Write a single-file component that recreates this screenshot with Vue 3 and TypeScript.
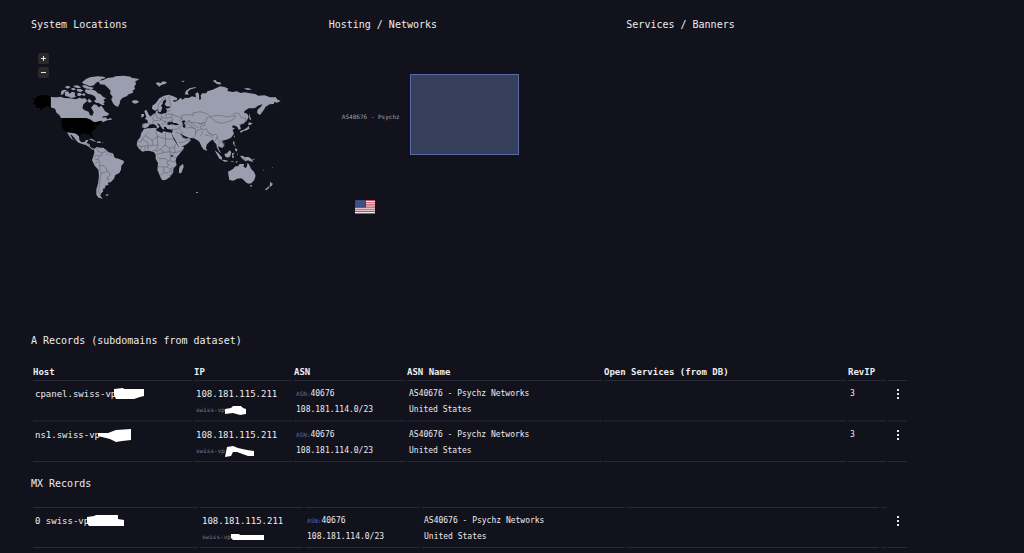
<script setup lang="ts">
interface Mask {
  w: number
  h: number
  points: string
}

interface RecordRow {
  host: string
  hostMask: Mask
  ip: string
  ptr: string
  ptrMask: Mask
  asn: string
  range: string
  asnName: string
  country: string
  revIp: string
}

interface RecordGroup {
  id: string
  title: string
  headers: string[]
  rows: RecordRow[]
}

const shared = {
  ip: '108.181.115.211',
  ptr: 'swiss-vp',
  asn: '40676',
  range: '108.181.114.0/23',
  asnName: 'AS40676 - Psychz Networks',
  country: 'United States',
}

const groups: RecordGroup[] = [
  {
    id: 'a',
    title: 'A Records (subdomains from dataset)',
    headers: ['Host', 'IP', 'ASN', 'ASN Name', 'Open Services (from DB)', 'RevIP', ''],
    rows: [
      {
        ...shared,
        host: 'cpanel.swiss-vp',
        hostMask: { w: 30, h: 12, points: '0,1 9,0 10,1 30,1 30,8 26,9 20,11 2,11 0,7' },
        ptrMask: { w: 21, h: 9, points: '0,3 6,2 8,0 16,0 18,2 21,3 21,8 15,9 8,7 0,8' },
        revIp: '3',
      },
      {
        ...shared,
        host: 'ns1.swiss-vp',
        hostMask: { w: 33, h: 13, points: '0,4 10,4 18,1 33,0 33,11 24,12 18,13 12,10 0,7' },
        ptrMask: { w: 29, h: 11, points: '2,1 8,0 13,2 22,4 29,5 29,10 23,10 12,6 8,6 6,10 0,11' },
        revIp: '3',
      },
    ],
  },
  {
    id: 'mx',
    title: 'MX Records',
    headers: ['', '', '', '', '', '', ''],
    rows: [
      {
        ...shared,
        host: '0 swiss-vp',
        hostMask: { w: 37, h: 12, points: '0,2 7,1 9,0 31,0 31,4 37,5 37,11 2,11 0,8' },
        ptrMask: { w: 33, h: 6, points: '0,0 8,0 9,1 33,1 33,6 2,6 0,4' },
        revIp: '',
      },
    ],
  },
]
</script>

<template>
  <main class="page">
    <section class="overview">
      <article class="panel">
        <h2>System Locations</h2>
        <div class="map">
          <div class="zoom">
            <button type="button" aria-label="Zoom in">
              <svg viewBox="0 0 11 11"><path d="M5.5 3v5M3 5.5h5" /></svg>
            </button>
            <button type="button" aria-label="Zoom out">
              <svg viewBox="0 0 11 11"><path d="M3 5.5h5" /></svg>
            </button>
          </div>
          <svg class="world" viewBox="33 75 768 399" role="img" aria-label="World map">
            <g class="land">
              <path d="M92 155L100 157 112 157 122 155 132 159 150 160 168 163 178 158 188 161 195 159 202 168 190 178 187 190 194 196 206 200 210 211 217 212 221 202 217 194 213 188 222 178 230 180 236 187 244 182 250 190 255 199 268 206 262 212 250 214 246 218 258 217 262 223 274 219 275 224 262 226 248 232 246 227 238 228 228 231 220 230 210 223 198 219 123 219 118 210 110 204 105 191 92 187Z" />
              <path d="M134 141L144 139 149 146 156 140 166 143 164 149 168 156 154 159 146 155 136 153ZM124 138L132 134 142 136 132 142 130 148 122 150ZM134 126L144 122 152 127 143 131ZM152 131L161 128 168 134 158 136ZM160 122L172 121 184 127 175 130 164 127ZM170 133L182 132 190 137 181 141 172 139ZM172 145L181 143 187 149 179 153 172 152ZM186 112L198 102 210 97 232 94 252 95 257 99 244 103 238 109 228 113 222 121 210 124 200 119 190 116ZM186 121L198 121 207 125 221 128 218 132 200 131 190 127ZM196 133L206 134 212 132 228 138 232 144 242 148 249 155 258 160 250 165 255 171 250 175 254 180 246 180 236 174 228 173 222 168 229 163 224 154 216 149 204 147 195 141ZM202 166L208 161 216 170 207 173ZM189 145L197 147 193 153 186 150Z" />
              <path d="M235 107L250 105 262 99 281 97 286 94 312 92 332 95 334 98 358 102 350 107 346 109 348 118 343 124 345 132 338 137 339 143 326 148 320 154 308 158 301 166 299 176 294 185 288 184 281 178 276 169 274 162 278 156 270 145 272 137 262 127 254 119 240 118Z" />
              <path d="M335 169L341 166 350 166 357 170 353 174 345 176 339 174Z" />
              <path d="M141 261L158 264 168 266 177 274 178 284 184 292 194 291 198 285 205 285 200 294 209 298 210 305 217 310 224 311 218 315 208 307 198 300 186 297 173 292 166 282 156 271 150 268 159 284 154 281 147 272Z" />
              <path d="M205 283L215 281 229 290 220 289 212 284ZM230 290L240 289 244 293 232 294ZM247 292L251 293 248 295Z" />
              <path d="M222 312L230 306 240 308 250 308 258 314 266 322 279 325 284 338 296 341 312 348 311 354 304 362 303 374 298 384 286 390 282 401 272 412 263 413 266 419 256 422 255 430 248 432 250 438 243 446 241 452 248 461 236 458 229 449 229 433 234 416 237 392 235 374 224 362 216 346 219 335 223 325Z" />
              <path d="M256 450L262 448 267 449 260 453Z" />
            </g>
            <g class="home">
              <path d="M92 153L76 151 60 151 48 155 50 160 37 162 46 168 39 175 48 180 45 187 56 189 63 187 58 195 47 202 65 193 75 185 84 184 92 190Z" />
              <path d="M125 220L192 219 206 222 213 226 223 233 233 232 240 228 244 229 239 238 230 243 226 251 215 260 214 266 219 275 218 280 212 275 209 268 199 268 194 265 184 268 178 274 168 265 158 263 143 262 132 256 126 246 124 232Z" />
            </g>
            <g transform="translate(390 0)">
              <g class="land">
                <path d="M-18 252L-8 250 0 250 14 248 20 250 19 257 28 260 35 264 41 259 54 262 65 263 66 269 72 284 79 295 86 306 102 305 101 312 90 325 79 338 77 347 80 360 70 371 70 382 60 396 48 404 38 406 34 402 27 386 22 374 24 354 17 341 17 329 12 322 0 318 -14 318 -23 320 -33 311 -40 301 -38 288 -29 276 -26 264Z" />
                <path d="M99 356L101 365 94 384 87 385 87 372 90 364Z" />
                <path d="M-22 236L-6 234 -8 225 -13 222 -4 219 3 213 11 206 17 205 18 198 23 196 24 205 34 207 49 203 51 195 46 191 59 189 62 185 49 184 44 178 49 169 46 163 39 169 38 176 33 182 37 188 32 201 27 202 23 193 15 197 6 191 7 182 18 174 28 160 42 152 56 149 70 154 82 160 80 166 68 166 74 171 85 165 92 158 97 164 106 158 116 159 126 154 138 157 136 146 143 141 147 148 148 165 153 162 152 151 157 145 169 145 172 139 188 134 210 124 224 126 235 131 232 138 248 141 260 139 272 144 284 142 300 145 316 147 325 152 344 151 360 157 378 157 381 163 392 168 381 173 372 171 372 177 359 178 346 186 343 193 330 210 322 205 322 195 334 184 337 178 324 182 314 190 296 190 283 199 283 204 292 206 296 215 290 228 280 237 274 237 270 242 273 252 266 254 262 246 257 243 249 241 246 247 255 250 248 255 252 266 243 278 230 284 222 286 216 288 223 300 218 309 211 307 204 303 207 314 214 324 208 321 201 308 199 297 193 292 189 284 182 287 171 298 167 312 162 315 155 305 148 290 141 285 132 280 118 279 102 272 91 264 99 278 110 281 117 278 123 286 111 297 90 308 84 302 78 289 71 277 66 267 68 254 52 252 47 245 41 246 43 254 37 251 28 238 20 234 29 245 22 251 19 242 11 237 4 238 -2 240 -6 246 -16 250 -24 247Z" />
                <path d="M-17 198L-11 194 -8 200 -4 208 2 217 -3 222 -16 223 -11 216ZM-26 207L-18 207 -18 214 -26 218Z" />
                <path d="M17 114L25 112 32 115 38 109 51 111 47 116 34 120 28 125 21 119ZM93 108L104 107 100 111ZM104 148L108 137 119 130 137 126 137 129 122 133 113 140 116 149ZM188 107L197 105 201 111 211 112 214 118 202 118 196 113ZM281 131L293 129 306 133 294 135ZM298 204L300 215 304 222 300 226 297 216Z" />
                <path d="M296 232L308 235 300 241 295 240ZM297 242L298 251 290 256 280 258 273 264 270 258 281 254 290 249ZM252 271L255 274 252 279ZM250 288L254 292 253 298 258 305 252 301 249 295ZM256 309L262 313 261 320 255 316ZM166 309L171 313 169 318 165 315ZM194 316L204 323 216 337 216 344 208 341 200 327ZM214 344L226 345 236 349 224 350ZM223 327L231 325 239 316 244 321 241 334 234 338 226 335ZM246 325L255 323 249 329 253 337 247 340ZM262 324L264 331 261 329ZM242 348L253 348 246 351ZM256 351L264 347 260 354ZM270 333L278 332 283 336 295 336 304 341 310 351 301 349 294 346 287 349 278 342ZM308 341L315 344 309 346ZM212 276L218 276 215 281Z" />
                <path d="M234 380L244 375 249 372 256 364 264 364 269 357 283 357 280 364 287 370 291 364 292 354 297 358 303 371 312 380 317 392 313 405 304 415 296 416 289 413 280 404 274 400 261 401 250 407 238 405 236 394Z" />
                <path d="M299 421L307 421 304 427ZM361 409L364 414 369 416 364 424 358 425 360 418ZM357 424L358 428 350 435 344 434ZM338 373L344 377 341 377ZM366 367L369 368 366 370ZM138 441L144 441 144 444 138 443Z" />
              </g>
              <g class="water">
                <path d="M56 230L62 232 69 229 68 234 78 234 88 239 78 241 66 238 56 240 51 237ZM95 228L104 226 106 231 101 234 107 240 105 249 98 246 99 238ZM63 329L69 331 67 336 63 334ZM115 225L118 225 118 229Z" />
              </g>
            </g>
            <g class="borders">
              <path d="M231 309L234 319 245 323 246 331 237 333 235 344 225 342M246 323L258 320 258 314M259 331L266 323M270 333L277 325M219 337L229 331 236 333M226 356L236 346 239 353 239 362 252 362 259 370 261 379 268 382 270 391 262 397 266 405M239 362L240 378 245 384 254 382 260 379M245 384L241 398 238 420 236 440 241 450M260 399L267 407M158 284L170 286M199 292L204 298 208 303" />
              <path d="M354 290L364 290 366 282 374 274 384 262M366 282L385 294 382 308M376 272L397 286 413 274 407 260M397 286L397 301 384 303 384 318M351 301L364 305 362 315M363 304L382 302M374 304L376 319M397 301L414 300 412 274 436 281M436 262L437 282 435 302M437 282L462 282M415 301L409 315 397 318M435 300L421 313 408 320M435 300L448 309 463 307 469 296M421 313L434 322 450 320 448 309M450 320L463 324 480 319 490 311M463 307L466 318 463 325M410 328L424 325 433 322M450 321L452 333 450 346 443 349 438 341 426 341 417 341M452 333L464 336 469 341M450 347L460 350 469 350M414 365L431 366 441 366 447 359 440 356 443 349M431 366L431 383 421 391M431 383L443 384 455 373M441 366L450 372 461 366M455 373L455 384 458 388M447 392L452 390 451 396" />
              <path d="M370 247L370 239M384 235L392 238M393 214L400 221 401 228 396 235M399 214L407 207M408 207L411 219 421 220 422 225 402 228M424 206L425 218 422 224 433 228 437 231 429 236M425 218L439 220 453 217 459 225 446 230M437 204L439 219M440 208L455 207 456 217M441 199L452 196M415 195L414 181 423 168 434 156M438 168L436 158M446 154L450 169 452 182M433 230L443 231 441 239M424 236L431 240M453 208L462 211 477 216 486 221 478 227" />
              <path d="M457 253L471 253 475 248 483 243M475 248L482 256 489 265M466 262L474 263 489 274M476 293L491 292 500 286 511 286M490 274L495 281 505 281M496 241L484 239M498 250L510 247 526 251 527 268 520 277M487 224L485 211 505 209 520 211 519 204 540 200 561 206 570 215 560 219 558 230 540 236 530 233 512 231 497 230M497 233L508 239 526 251M510 231L532 247 536 246M534 233L546 239 553 232 555 240 540 246 544 252 533 255 527 267M544 252L552 255 559 250 564 262 575 270 577 280M540 274L546 267 548 258M564 263L580 270 588 268 593 275 585 288M570 215L581 213 598 211 625 216 637 212 648 214 642 222 630 228 605 235 587 230 571 216M638 210L646 204 657 206 665 219 677 219 676 231 664 239M657 240L666 236M591 275L592 282 600 290 596 299M600 287L608 296 612 306M606 284L614 294 614 303M674 334L674 348M554 269L569 273" />
            </g>
          </svg>
        </div>
      </article>

      <article class="panel">
        <h2>Hosting / Networks</h2>
        <div class="chart">
          <span class="chart-label">AS40676 - Psychz</span>
          <div class="bar"></div>
        </div>
        <svg class="flag" viewBox="0 0 20 14" role="img" aria-label="United States">
          <rect width="20" height="14" fill="#ece6e8" />
          <path d="M0 .5h20M0 2.7h20M0 4.9h20M0 7.1h20M0 9.2h20M0 11.4h20M0 13.5h20" stroke="#c4505c" stroke-width="1.1" />
          <rect width="11" height="7.6" fill="#34477e" />
          <path d="M1 1.5h9M1.5 3h9M1 4.5h9M1.5 6h9" stroke="#7d8bb4" stroke-width=".6" stroke-dasharray=".7 1.1" />
        </svg>
      </article>

      <article class="panel">
        <h2>Services / Banners</h2>
      </article>
    </section>

    <section v-for="group in groups" :key="group.id" class="records">
      <h2 :id="`title-${group.id}`">{{ group.title }}</h2>
      <table :class="group.id" :aria-labelledby="`title-${group.id}`">
        <colgroup>
          <col v-for="n in 7" :key="n" :class="`c${n}`" />
        </colgroup>
        <thead>
          <tr>
            <th v-for="(label, i) in group.headers" :key="i" scope="col">{{ label }}</th>
          </tr>
        </thead>
        <tbody>
          <tr v-for="row in group.rows" :key="row.host">
            <td>
              <div class="line large">
                {{ row.host }}
                <svg class="mask" :width="row.hostMask.w" :height="row.hostMask.h" aria-hidden="true">
                  <polygon :points="row.hostMask.points" />
                </svg>
              </div>
            </td>
            <td>
              <div class="line large">{{ row.ip }}</div>
              <div class="line tiny">
                {{ row.ptr }}
                <svg class="mask" :width="row.ptrMask.w" :height="row.ptrMask.h" aria-hidden="true">
                  <polygon :points="row.ptrMask.points" />
                </svg>
              </div>
            </td>
            <td>
              <div class="line"><span class="asn">ASN:</span>{{ row.asn }}</div>
              <div class="line">{{ row.range }}</div>
            </td>
            <td>
              <div class="line">{{ row.asnName }}</div>
              <div class="line">{{ row.country }}</div>
            </td>
            <td></td>
            <td><div class="line">{{ row.revIp }}</div></td>
            <td class="actions">
              <button type="button" :aria-label="`Actions for ${row.host}`">
                <svg width="4" height="12" viewBox="0 0 4 12">
                  <path d="M1 1h2v2H1zM1 5h2v2H1zM1 9h2v2H1z" />
                </svg>
              </button>
            </td>
          </tr>
        </tbody>
      </table>
    </section>
  </main>
</template>

<style>
body {
  margin: 0;
  background: #11121b;
}
</style>

<style scoped>
.page {
  box-sizing: border-box;
  min-height: 100vh;
  padding: 17px 100px 4px 31px;
  background: #11121b;
  color: #ededf0;
  font-family: "DejaVu Sans Mono", "Liberation Mono", monospace;
  font-size: 8px;
  line-height: 16px;
}

h2 {
  margin: 0;
  font-size: 10px;
  font-weight: 400;
  line-height: 16px;
}

button {
  display: block;
  padding: 0;
  border: 0;
  background: none;
  cursor: pointer;
}

.overview {
  display: grid;
  grid-template-columns: repeat(3, 1fr);
  min-height: 316px;
}

.map {
  position: relative;
  padding-top: 37px;
}

.world {
  display: block;
  width: 86%;
  height: auto;
}

.land {
  fill: #9b9eae;
}

.home {
  fill: #000;
}

.water {
  fill: #11121b;
}

.borders {
  fill: none;
  stroke: #555764;
  stroke-width: 1.5;
}

.zoom {
  position: absolute;
  top: 20px;
  left: 7px;
  display: grid;
  gap: 3px;
}

.zoom button {
  width: 11px;
  height: 11px;
  border-radius: 2px;
  background: #292929;
}

.zoom svg {
  display: block;
  fill: none;
  stroke: #e6e6e6;
  stroke-width: 1;
}

.chart {
  display: flex;
  align-items: center;
  gap: 10px;
  margin-top: 41px;
}

.chart-label {
  width: 71px;
  padding-top: 4px;
  color: #a3a5af;
  font-size: 6px;
  text-align: right;
  white-space: nowrap;
}

.bar {
  box-sizing: border-box;
  width: 109px;
  height: 81px;
  border: 1px solid #5a6aa2;
  background: #353e5b;
}

.flag {
  display: block;
  width: 20px;
  height: 14px;
  margin: 45px 0 0 26px;
}

.records {
  margin: 0 15px 14px 0;
}

.records:last-child {
  margin-bottom: 0;
}

table {
  width: 100%;
  margin-top: 15px;
  table-layout: fixed;
  border-collapse: separate;
  border-spacing: 2px 0;
}

.c1 { width: 159px; }
.c2 { width: 98px; }
.c3 { width: 111px; }
.c4 { width: 195px; }
.c6 { width: 38px; }
.c7 { width: 19px; }

.mx .c1 { width: 165px; }
.mx .c2 { width: 103px; }
.mx .c3 { width: 115px; }
.mx .c4 { width: 203px; }
.mx .c6 { width: 5px; }

th {
  padding: 0;
  border-bottom: 1px solid #292a38;
  font-size: 9px;
  font-weight: 700;
  text-align: left;
  white-space: nowrap;
}

.mx th:last-child {
  border-bottom: 0;
}

td {
  padding: 5px 0 2px 2px;
  border-bottom: 2px solid #1c1d29;
  vertical-align: top;
}

tr:last-child td {
  border-bottom: 1px solid #292a38;
}

.line {
  display: flex;
  align-items: center;
  height: 16px;
  white-space: nowrap;
}

.large {
  font-size: 9px;
}

.tiny {
  color: #7b7f94;
  font-size: 6px;
}

.asn {
  color: #566fb8;
  font-size: 6px;
}

.mask {
  flex: none;
  margin-left: -2px;
  fill: #fff;
}

.tiny .mask {
  margin-left: 0;
}

.actions {
  padding-left: 0;
}

.actions button {
  display: grid;
  place-items: center;
  width: 100%;
  height: 16px;
}

.actions svg {
  fill: #e9e9ed;
}
</style>
